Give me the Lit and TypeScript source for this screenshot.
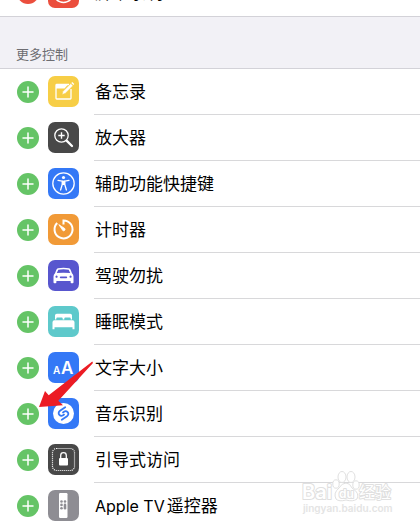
import { LitElement, html, svg, css } from "lit";
import { customElement, property } from "lit/decorators.js";

interface Control {
  name: string;
  brand?: string;
  icon: string;
  color: string;
}

const CONTROLS: Control[] = [
  { name: "备忘录", icon: "notes", color: "#f7ce46" },
  { name: "放大器", icon: "magnifier", color: "#484848" },
  { name: "辅助功能快捷键", icon: "accessibility", color: "#3478f6" },
  { name: "计时器", icon: "timer", color: "#f19a37" },
  { name: "驾驶勿扰", icon: "car", color: "#5856ce" },
  { name: "睡眠模式", icon: "bed", color: "#5ec9cb" },
  { name: "文字大小", icon: "text", color: "#3478f6" },
  { name: "音乐识别", icon: "shazam", color: "#3478f6" },
  { name: "引导式访问", icon: "guided", color: "#484848" },
  { brand: "Apple TV", name: "遥控器", icon: "remote", color: "#8e8d93" },
];

const GLYPHS: Record<string, unknown> = {
  record: svg`<circle cx="15.5" cy="15.5" r="10" fill="none" stroke="#fff" stroke-width="1.5"/><circle cx="15.5" cy="15.5" r="6" fill="#fff"/>`,
  notes: svg`<path d="M21 8.5H8.8Q8 8.5 8 9.3V22.2Q8 23 8.8 23H22.2Q23 23 23 22.2V13" fill="none" stroke="#fff" stroke-width="1.3"/><path d="M8 8.5H20L16.5 12.5H8Z" fill="#fff"/><path d="M14 18.5L15 15.3L22.8 7.5L25 9.7L17.2 17.5Z" fill="#fff" stroke="#f7ce46" stroke-width=".6"/><path d="M23.3 7L24.3 6L26.3 8L25.4 9Z" fill="#fff"/>`,
  magnifier: svg`<circle cx="13.5" cy="13.5" r="6.7" fill="none" stroke="#fff" stroke-width="1.3"/><path d="M13.5 10.3v6.4M10.3 13.5h6.4" stroke="#fff" stroke-width="1.4"/><path d="M18.6 18.6L24 24" stroke="#fff" stroke-width="2.3" stroke-linecap="round"/>`,
  accessibility: svg`<circle cx="15.5" cy="15.5" r="10.7" fill="none" stroke="#fff" stroke-width="1.3"/><circle cx="15.5" cy="9.5" r="1.6" fill="#fff"/><path d="M10 12.4L14.2 13.1V16.5L12.6 22M21 12.4L16.8 13.1V16.5L18.4 22" fill="none" stroke="#fff" stroke-width="1.3" stroke-linecap="round" stroke-linejoin="round"/><path d="M14 12.6h3v4.4h-3z" fill="#fff"/>`,
  timer: svg`<path d="M9.2 9A9 9 0 1 0 15.5 6.4V10.5" fill="none" stroke="#fff" stroke-width="2"/><path d="M10.8 10.6L16.8 14.6A1.4 1.4 0 0 1 14.8 16.5Z" fill="#fff" stroke="#fff" stroke-width=".8" stroke-linejoin="round"/>`,
  car: svg`<path fill="#fff" fill-rule="evenodd" d="M10 8.3Q15.5 7.3 21 8.3Q22.1 8.6 22.6 9.7L24 13.2Q25.5 14.6 25.5 16.5V22.3Q25.5 23.2 24.6 23.2H23.5Q22.6 23.2 22.6 22.3V21H8.4V22.3Q8.4 23.2 7.5 23.2H6.4Q5.5 23.2 5.5 22.3V16.5Q5.5 14.6 7 13.2L8.4 9.7Q8.9 8.6 10 8.3ZM10.3 9.7L8.8 13.1Q15.5 12.3 22.2 13.1L20.7 9.7Q15.5 8.9 10.3 9.7ZM8.5 15.6a1.1 1.1 0 1 0 .1 0ZM22.5 15.6a1.1 1.1 0 1 0 .1 0ZM12.7 16.4a.7.7 0 0 0 0 1.8h5.6a.7.7 0 0 0 0-1.8Z"/>`,
  bed: svg`<path fill="#fff" d="M7 13.5V9.5Q7 7.7 8.8 7.7H22.2Q24 7.7 24 9.5V13.5H22.7V12.5Q22.7 11.5 21.7 11.5H17.3Q16.3 11.5 16.3 12.5V13.5H14.7V12.5Q14.7 11.5 13.7 11.5H9.3Q8.3 11.5 8.3 12.5V13.5ZM6.5 14.3H24.5Q26.5 14.3 26.5 16.3V23.2H24.5V21.2H6.5V23.2H4.5V16.3Q4.5 14.3 6.5 14.3Z"/>`,
  text: svg`<text x="5" y="22" class="letter small">A</text><text x="13" y="22" class="letter big">A</text>`,
  shazam: svg`<circle cx="15.5" cy="15.5" r="10.5" fill="#fff"/><path d="M17.2 9.3L12 12.8Q9.6 14.8 11.4 16.8Q13 18.600 15 17.300L16 16.600M13.800 21.700L19 18.200Q21.400 16.200 19.600 14.200Q18 12.400 16 13.700L15 14.400" fill="none" stroke="#3478f6" stroke-width="1.8" stroke-linecap="round"/>`,
  guided: svg`<rect x="4.5" y="4.5" width="22" height="22" rx="4" fill="none" stroke="#fff" stroke-width="1.2" stroke-dasharray="1 1"/><rect x="11" y="14" width="9" height="7.5" rx="1" fill="#fff"/><path d="M12.7 14V11.5a2.8 2.8 0 0 1 5.6 0V14" fill="none" stroke="#fff" stroke-width="1.3"/>`,
  remote: svg`<rect x="11" y="3" width="8.5" height="25" rx="1.2" fill="#fff"/><g fill="#8e8d93"><circle cx="13.5" cy="11.5" r="1.3"/><circle cx="17" cy="11.5" r="1.3"/><circle cx="13.5" cy="14.9" r="1.3"/><circle cx="13.5" cy="18.3" r="1.3"/><rect x="15.7" y="13.6" width="2.6" height="6" rx="1.3"/></g>`,
};

@customElement("control-row")
class ControlRow extends LitElement {
  @property() name = "";
  @property() brand = "";
  @property() icon = "";
  @property() color = "";
  @property({ type: Boolean }) added = false;

  static styles = css`
    :host { display: flex; align-items: stretch; height: 46px; padding-left: 17px; background: #fff; }
    .toggle { align-self: center; flex: none; width: 22px; height: 22px; margin: 0 0 1px; padding: 0; border: 0; border-radius: 50%; background: #65c466; }
    .toggle.remove { background: #eb4e3d; }
    .toggle svg, .tile svg { display: block; }
    .tile { align-self: center; flex: none; width: 31px; height: 31px; margin: 0 15px 1px 9px; border-radius: 7px; }
    .name { flex: 1; display: flex; align-items: center; gap: 2px; box-sizing: border-box; padding-left: 1px; border-bottom: 1px solid #d8d8da; }
    :host([added]) .name { border: 0; }
    .brand { font-size: 16px; }
    .letter { font-family: Inter, sans-serif; font-weight: 600; fill: #fff; }
    .small { font-size: 10px; }
    .big { font-size: 17px; }
  `;

  render() {
    return html`
      <button class="toggle ${this.added ? "remove" : "add"}" aria-label="${this.added ? "移除" : "添加"} ${this.brand}${this.name}">
        <svg viewBox="0 0 22 22" width="22" height="22">
          <path d=${this.added ? "M6 11h10" : "M6 11h10M11 6v10"} stroke="#fff" stroke-width="1.5" stroke-linecap="round"/>
        </svg>
      </button>
      <div class="tile" style="background:${this.color}">
        <svg viewBox="0 0 31 31" width="31" height="31" aria-hidden="true">${GLYPHS[this.icon]}</svg>
      </div>
      <div class="name">${this.brand ? html`<span class="brand">${this.brand}</span>` : ""}<span>${this.name}</span></div>
    `;
  }
}

@customElement("app-root")
class AppRoot extends LitElement {
  static styles = css`
    :host { display: block; position: relative; height: 100vh; overflow: hidden; background: #fff; color: #000; font: 17px/24px Inter, "Noto Sans CJK SC", sans-serif; }
    .included { display: flex; flex-direction: column; justify-content: flex-end; height: 16px; overflow: hidden; }
    .included control-row { flex: none; }
    .heading { margin: 0; padding: 27px 16px 4px; border: solid #d3d2d8; border-width: 1px 0; background: #f2f1f6; color: #6d6d72; font-size: 13px; line-height: 20px; font-weight: 400; }
    .pointer { position: absolute; left: 36px; top: 358px; }
    .watermark { position: absolute; right: 20px; top: 468px; }
    .mark { font-family: Inter, "Noto Sans CJK SC", sans-serif; fill: #fff; stroke: #e0e0e0; stroke-width: 2px; stroke-linejoin: round; font-weight: 600; paint-order: stroke; }
    .large { font-size: 20px; }
    .inner { font-size: 12px; }
    .cjk { font-size: 16px; font-weight: 400; }
    .site { font-size: 10px; fill: #e4e4e4; stroke: none; }
  `;

  render() {
    return html`
      <div class="included">
        <control-row added name="屏幕录制" icon="record" color="#eb4e3d"></control-row>
      </div>
      <h2 class="heading">更多控制</h2>
      <main>
        ${CONTROLS.map((c) => html`<control-row name=${c.name} brand=${c.brand ?? ""} icon=${c.icon} color=${c.color}></control-row>`)}
      </main>
      <svg class="pointer" width="60" height="52" viewBox="0 0 60 52" aria-hidden="true">
        <path d="M3 49L9 33L12.7 37.3L56.3 3.5L57 5L22.3 42.7L27 47.2Z" fill="#ec1c24"/>
      </svg>
      <svg class="watermark" width="100" height="48" viewBox="0 0 100 48" aria-hidden="true">
        <g fill="#fff" stroke="#e0e0e0">
          <ellipse cx="42" cy="9" rx="4" ry="5.5"/><ellipse cx="51" cy="9" rx="4" ry="5.5"/>
          <ellipse cx="36" cy="16" rx="3.2" ry="4.2"/><ellipse cx="56" cy="17" rx="3.2" ry="4.2"/>
          <path d="M46 15Q50 15 52 20Q60 25 57 31Q53 34 46 32Q39 34 36 31Q33 25 39 20Q42 15 46 15Z"/>
        </g>
        <text x="2" y="31" class="mark large">Bai</text>
        <text x="39" y="30" class="mark inner">du</text>
        <text x="59" y="30" class="mark cjk">经验</text>
        <text x="3" y="44" class="mark site">jingyan.baidu.com</text>
      </svg>
    `;
  }
}
